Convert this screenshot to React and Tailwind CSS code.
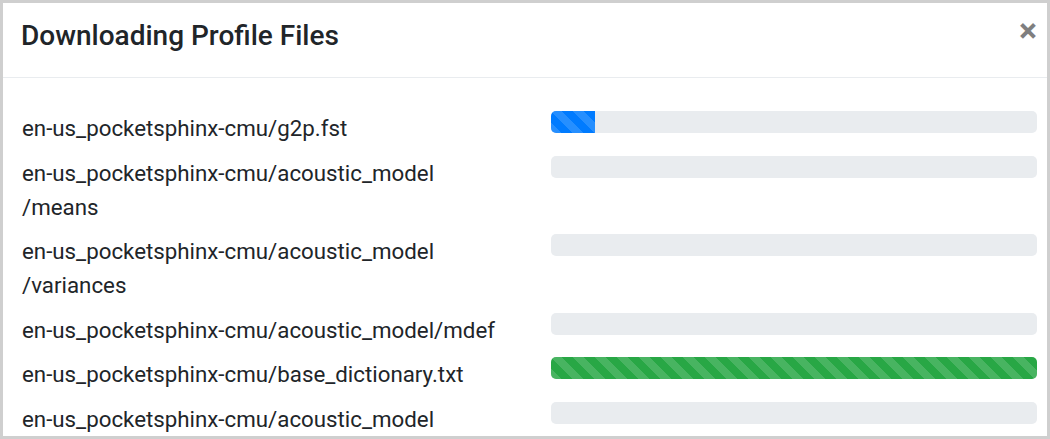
import React from "react";

const files = [
  { lines: ["en-us_pocketsphinx-cmu/g2p.fst"], progress: 9, color: "bg-[#007bff]" },
  { lines: ["en-us_pocketsphinx-cmu/acoustic_model", "/means"], progress: 0, color: "bg-[#007bff]" },
  { lines: ["en-us_pocketsphinx-cmu/acoustic_model", "/variances"], progress: 0, color: "bg-[#007bff]" },
  { lines: ["en-us_pocketsphinx-cmu/acoustic_model/mdef"], progress: 0, color: "bg-[#007bff]" },
  { lines: ["en-us_pocketsphinx-cmu/base_dictionary.txt"], progress: 100, color: "bg-[#28a745]" },
  { lines: ["en-us_pocketsphinx-cmu/acoustic_model"], progress: 0, color: "bg-[#007bff]" },
];

function ProgressBar({ progress, color }) {
  return (
    <div className="h-[22px] w-full overflow-hidden rounded-[5px] bg-[#e9ecef]">
      {progress > 0 && (
        <div
          className={`h-full ${color} bg-[linear-gradient(45deg,rgba(255,255,255,.15)_25%,transparent_25%,transparent_50%,rgba(255,255,255,.15)_50%,rgba(255,255,255,.15)_75%,transparent_75%,transparent)] bg-size-[22px_22px]`}
          style={{ width: `${progress}%` }}
        />
      )}
    </div>
  );
}

function FileRow({ lines, progress, color }) {
  return (
    <div className="flex items-start">
      <div className="w-[529px] shrink-0 text-[22.3px] leading-[34px] text-[#212529]">
        {lines.map((line) => (
          <div key={line} className="whitespace-nowrap">
            {line}
          </div>
        ))}
      </div>
      <div className="flex-1">
        <ProgressBar progress={progress} color={color} />
      </div>
    </div>
  );
}

export default function App() {
  return (
    <div className="h-[439px] w-[1050px] bg-[#cfcfcf] p-[3px] font-['Roboto',sans-serif]">
      <div className="h-[433px] overflow-hidden bg-white">
        <div className="flex h-[75px] items-start justify-between border-b border-[#e9ecef] pl-[18px] pr-[10px] pt-[13px]">
          <h5 className="text-[28px] font-medium leading-[40px] text-[#212529]">Downloading Profile Files</h5>
          <button className="mt-[-6px] text-[34px] font-bold leading-[40px] text-black/50">×</button>
        </div>
        <div className="flex flex-col gap-[10.5px] pl-[19px] pr-[10px] pt-[33px]">
          {files.map((f) => (
            <FileRow key={f.lines.join("")} {...f} />
          ))}
        </div>
      </div>
    </div>
  );
}
